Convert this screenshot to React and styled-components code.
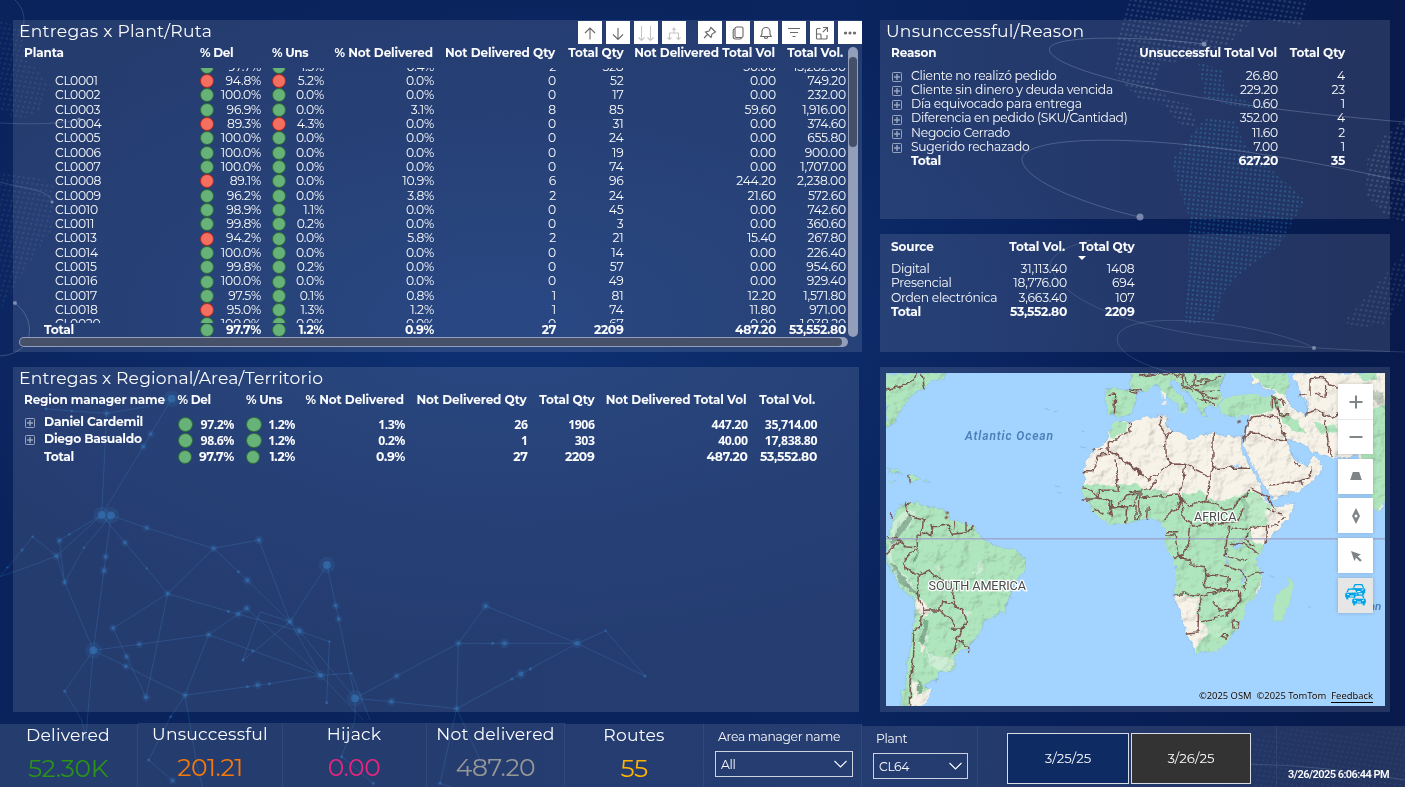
import React from "react";
import styled, { createGlobalStyle } from "styled-components";

const Global = createGlobalStyle`
  html, body { margin: 0; padding: 0; background: #0a2156; }
  *, *::before, *::after { box-sizing: border-box; }
  body { overflow: hidden; font-family: Montserrat, Inter, sans-serif; color: #fafbfd; }
`;

const Page = styled.main`
  position: relative;
  width: 1405px;
  height: 787px;
  overflow: hidden;
  display: flex;
  flex-direction: column;
  background:
    radial-gradient(ellipse 640px 330px at 500px 320px, #0e3174 0%, rgba(13, 45, 108, 0.75) 45%, rgba(10, 34, 92, 0) 100%),
    linear-gradient(90deg, #0a235c 0%, #0a255f 60%, #08205a 75%, #071a4b 100%);
`;
const Backdrop = styled.svg`
  position: absolute;
  inset: 0;
`;
const Board = styled.div`
  position: relative;
  display: flex;
  height: 712px;
  padding: 20px 15px 0 13px;
`;
const LeftCol = styled.div`
  display: flex;
  flex-direction: column;
  gap: 15px;
  width: 867px;
`;
const RightCol = styled(LeftCol)`
  width: 510px;
`;
const Panel = styled.section`
  position: relative;
  flex: none;
  width: ${(p) => p.$w}px;
  height: ${(p) => p.$h}px;
  background: rgba(255, 255, 255, 0.115);
`;
const Title = styled.h2`
  margin: 0;
  padding-left: 6px;
  height: 23px;
  line-height: 22px;
  font-weight: 400;
  font-size: 17.200px;
  letter-spacing: ${(p) => p.$ls ?? 0.2}px;
  white-space: nowrap;
`;

/* ---- tables ---- */
const HeadRow = styled.div`
  display: grid;
  grid-template-columns: ${(p) => p.$cols};
  height: 20px;
  line-height: 20px;
  font-weight: 700;
  font-size: 12px;
`;
const HeadCell = styled.div`
  text-align: ${(p) => (p.$left ? "left" : "right")};
  padding-left: ${(p) => p.$pl || 0}px;
  padding-right: ${(p) => p.$pr || 0}px;
  letter-spacing: ${(p) => p.$ls ?? -0.12}px;
  white-space: nowrap;
`;
const Row = styled.div`
  display: grid;
  grid-template-columns: ${(p) => p.$cols};
  height: ${(p) => p.$h || 14.32}px;
  line-height: ${(p) => p.$h || 14.32}px;
  font-size: 12.3px;
  font-weight: ${(p) => (p.$bold ? 700 : 400)};
  letter-spacing: ${(p) => p.$ls ?? (p.$bold ? -0.28 : -0.2)}px;
  white-space: nowrap;
`;
const Cell = styled.div`
  display: flex;
  align-items: center;
  justify-content: ${(p) => (p.$status ? "space-between" : "flex-end")};
  padding-left: ${(p) => p.$pl || 0}px;
`;
const NameCell = styled.div`
  display: flex;
  align-items: center;
  padding-left: ${(p) => p.$pl}px;
  letter-spacing: ${(p) => p.$ls ?? -0.27}px;
`;
const Dot = styled.i`
  flex: none;
  width: ${(p) => p.$s || 14}px;
  height: ${(p) => p.$s || 14}px;
  border-radius: 50%;
  background: ${(p) => (p.$bad ? "#f46f60" : "#67b279")};
  border: 1px solid ${(p) => (p.$bad ? "#b5251d" : "#2c6a35")};
`;
const Clip = styled.div`
  height: 255px;
  margin-top: 5px;
  overflow: hidden;
`;
const Shift = styled.div`
  margin-top: -8.3px;
`;

/* ---- scrollbars ---- */
const Body = styled.div`
  display: flex;
  height: 294px;
`;
const TableArea = styled.div`
  width: 835px;
`;
const VTrack = styled.div`
  width: 10px;
  height: 290px;
  margin-top: 4px;
  padding: 10px 1px 0;
  border-radius: 5px;
  background: #939eba;
`;
const VThumb = styled.div`
  height: 90px;
  border-radius: 4px;
  background: #454f68;
`;
const HTrack = styled.div`
  width: 829px;
  height: 10px;
  margin-left: 6px;
  padding: 1px 6px 1px 1px;
  border-radius: 5px;
  background: #939eba;
`;
const HThumb = styled.div`
  height: 8px;
  border-radius: 4px;
  background: #465068;
`;

/* ---- visual header toolbar ---- */
const Toolbar = styled.div`
  position: absolute;
  top: 1px;
  right: 0;
  display: flex;
  gap: 4px;
`;
const Tool = styled.button`
  width: 24px;
  height: 23px;
  padding: 0;
  border: 0;
  background: #fff;
  color: ${(p) => (p.$dim ? "#c8c6c4" : "#6b6967")};
  margin-left: ${(p) => (p.$gap ? 8 : 0)}px;
  svg { display: block; }
`;

const TOOLS = [
  { d: "M12 18.500V7M7 12l5-5 5 5" },
  { d: "M12 7v11.500M7 13.500l5 5 5-5" },
  { d: "M7.500 5v14.500M4.500 16.500l3 3 3-3M16.500 5v14.500M13.500 16.500l3 3 3-3", dim: true },
  { d: "M12 7v5M7.500 18.500v-6.500h9v6.500M5.500 16.500l2 2 2-2M14.500 16.500l2 2 2-2M10.500 9l1.500-2 1.500 2", dim: true },
  { d: "M13 6.500l4.500 4.500-3.500 2-1 3.500-5.500-5.500 3.500-1zM9.500 13.500L6 17", gap: true },
  { d: "M10 6h5.500a1.500 1.500 0 0 1 1.500 1.500v7.500a1.500 1.500 0 0 1-1.500 1.500h-5a1.500 1.500 0 0 1-1.500-1.500v-7.500a1.500 1.500 0 0 1 1.500-1.500zM9 7.800Q7.200 8 7.200 9.500v6q0 2.500 2.500 2.500h4Q15 18 15.500 17" },
  { d: "M6.800 15.500l1.200-2.500v-2.500a4 4 0 0 1 8 0v2.500l1.200 2.500zM10.300 15.800a1.700 1.700 0 0 0 3.400 0" },
  { d: "M6 7.500h12M8 11.500h8M10.500 15.500h3" },
  { d: "M10.500 7.500h-3a1 1 0 0 0-1 1v8.500a1 1 0 0 0 1 1h8.500a1 1 0 0 0 1-1v-3M13 6.500h4.500v4.500M17.300 6.700l-4.500 4.500M6.500 13h3.500a1 1 0 0 1 1 1v4" },
  { dots: true },
];

/* ---- expand toggle and sort marker ---- */
const ToggleBox = styled.span`
  width: ${(p) => p.$w}px;
  flex: none;
  display: flex;
  position: relative;
  top: 1px;
  opacity: 0.62;
`;
const Toggle = ({ w = 20 }) => (
  <ToggleBox $w={w}>
    <svg width="10" height="10" viewBox="0 0 10 10" fill="none" stroke="#dfe4ee">
      <rect x="0.500" y="0.500" width="9" height="9" rx="0.800" />
      <path d="M2 5h6M5 2v6" strokeWidth="1.400" />
    </svg>
  </ToggleBox>
);
const SortMark = styled.span`
  position: absolute;
  top: 22px;
  left: 198px;
  border: 4px solid transparent;
  border-top-color: #fff;
  border-bottom: 0;
`;

/* ---- data ---- */
const PLANTS = [
  ["", 97.7, "1.5%", "0.4%", "2", "328", "50.00", "13,282.00"],
  ["CL0001", 94.8, "5.2%", "0.0%", "0", "52", "0.00", "749.20"],
  ["CL0002", 100, "0.0%", "0.0%", "0", "17", "0.00", "232.00"],
  ["CL0003", 96.9, "0.0%", "3.1%", "8", "85", "59.60", "1,916.00"],
  ["CL0004", 89.3, "4.3%", "0.0%", "0", "31", "0.00", "374.60"],
  ["CL0005", 100, "0.0%", "0.0%", "0", "24", "0.00", "655.80"],
  ["CL0006", 100, "0.0%", "0.0%", "0", "19", "0.00", "900.00"],
  ["CL0007", 100, "0.0%", "0.0%", "0", "74", "0.00", "1,707.00"],
  ["CL0008", 89.1, "0.0%", "10.9%", "6", "96", "244.20", "2,238.00"],
  ["CL0009", 96.2, "0.0%", "3.8%", "2", "24", "21.60", "572.60"],
  ["CL0010", 98.9, "1.1%", "0.0%", "0", "45", "0.00", "742.60"],
  ["CL0011", 99.8, "0.2%", "0.0%", "0", "3", "0.00", "360.60"],
  ["CL0013", 94.2, "0.0%", "5.8%", "2", "21", "15.40", "267.80"],
  ["CL0014", 100, "0.0%", "0.0%", "0", "14", "0.00", "226.40"],
  ["CL0015", 99.8, "0.2%", "0.0%", "0", "57", "0.00", "954.60"],
  ["CL0016", 100, "0.0%", "0.0%", "0", "49", "0.00", "929.40"],
  ["CL0017", 97.5, "0.1%", "0.8%", "1", "81", "12.20", "1,571.80"],
  ["CL0018", 95.0, "1.3%", "1.2%", "1", "74", "11.80", "971.00"],
  ["CL0020", 100, "0.0%", "0.0%", "0", "67", "0.00", "1,038.20"],
];
const TOTALS = ["27", "2209", "487.20", "53,552.80"];
const REASONS = [
  ["Cliente no realizó pedido", "26.80", "4"],
  ["Cliente sin dinero y deuda vencida", "229.20", "23"],
  ["Día equivocado para entrega", "0.60", "1"],
  ["Diferencia en pedido (SKU/Cantidad)", "352.00", "4"],
  ["Negocio Cerrado", "11.60", "2"],
  ["Sugerido rechazado", "7.00", "1"],
];
const SOURCES = [
  ["Digital", "31,113.40", "1408"],
  ["Presencial", "18,776.00", "694"],
  ["Orden electrónica", "3,663.40", "107"],
];

const C1 = "187px 61px 63px 110px 122px 67.5px 152.5px 70px";
const C2 = "164.5px 56.5px 61px 110px 122.5px 67px 153px 69.500px";
const C3 = "200px 198px 67px";
const C4 = "100px 87px 67.500px";

const PlantTable = () => (
  <Panel $w={849} $h={332}>
    <Title $ls={0.25}>Entregas x Plant/Ruta</Title>
    <Body>
      <TableArea>
        <HeadRow $cols={C1}>
          <HeadCell $left $pl={11} $ls={-0.1}>Planta</HeadCell>
          <HeadCell $left $ls={-0.35}>% Del</HeadCell>
          <HeadCell $left $pl={11} $ls={-0.35}>% Uns</HeadCell>
          <HeadCell $pr={1}>% Not Delivered</HeadCell>
          <HeadCell $pr={1}>Not Delivered Qty</HeadCell>
          <HeadCell>Total Qty</HeadCell>
          <HeadCell $pr={1}>Not Delivered Total Vol</HeadCell>
          <HeadCell $pr={3}>Total Vol.</HeadCell>
        </HeadRow>
        <Clip>
          <Shift>
            {PLANTS.map((r, i) => (
              <Row key={i} $cols={C1}>
                <NameCell $pl={42} $ls={-0.3}>{r[0]}</NameCell>
                <Cell $status><Dot $bad={r[1] <= 95} />{r[1].toFixed(1)}%</Cell>
                <Cell $status $pl={11}><Dot $bad={parseFloat(r[2]) > 4} />{r[2]}</Cell>
                {r.slice(3).map((v, k) => <Cell key={k}>{v}</Cell>)}
              </Row>
            ))}
          </Shift>
        </Clip>
        <Row $cols={C1} $h={14} $bold>
          <NameCell $pl={31}>Total</NameCell>
          <Cell $status><Dot />97.7%</Cell>
          <Cell $status $pl={11}><Dot />1.2%</Cell>
          <Cell>0.9%</Cell>
          {TOTALS.map((v) => <Cell key={v}>{v}</Cell>)}
        </Row>
      </TableArea>
      <VTrack><VThumb /></VTrack>
    </Body>
    <HTrack><HThumb /></HTrack>
    <Toolbar>
      {TOOLS.map((t, i) => (
        <Tool key={i} $dim={t.dim} $gap={t.gap}>
          <svg width="24" height="24" viewBox="0 0 24 24" fill="none" stroke="currentColor" strokeWidth="1.100">
            {t.dots
              ? [7.5, 12, 16.5].map((x) => <circle key={x} cx={x} cy="12" r="1" fill="currentColor" />)
              : <path d={t.d} />}
          </svg>
        </Tool>
      ))}
    </Toolbar>
  </Panel>
);

const RegionRow = styled(Row)`
  height: ${(p) => p.$rh}px;
  line-height: 17px;
  font-family: ${(p) => (p.$alt ? '"Noto Sans", sans-serif' : "inherit")};
`;
const ManagerName = styled(NameCell)`
  font-family: Montserrat, Inter, sans-serif;
  font-size: 12.3px;
  position: relative;
  top: ${(p) => p.$dy || 0}px;
`;
const RegionBody = styled.div`
  padding-top: 6px;
`;
const RegionTable = () => (
  <Panel $w={846} $h={345}>
    <Title $ls={0.13}>Entregas x Regional/Area/Territorio</Title>
    <HeadRow $cols={C2}>
      <HeadCell $left $pl={11} $ls={-0.17}>Region manager name</HeadCell>
      <HeadCell $left $ls={-0.35}>% Del</HeadCell>
      <HeadCell $left $pl={12} $ls={-0.35}>% Uns</HeadCell>
      <HeadCell $pr={1}>% Not Delivered</HeadCell>
      <HeadCell $pr={1}>Not Delivered Qty</HeadCell>
      <HeadCell>Total Qty</HeadCell>
      <HeadCell $pr={1}>Not Delivered Total Vol</HeadCell>
      <HeadCell $pr={2}>Total Vol.</HeadCell>
    </HeadRow>
    <RegionBody>
      {[
        ["Daniel Cardemil", "97.2%", "1.2%", "1.3%", "26", "1906", "447.20", "35,714.00"],
        ["Diego Basualdo", "98.6%", "1.2%", "0.2%", "1", "303", "40.00", "17,838.80"],
      ].map((r, i) => (
        <RegionRow key={r[0]} $cols={C2} $bold $alt $rh={16} $ls={-0.45}>
          <ManagerName $pl={12} $dy={i ? -2 : -3}><Toggle w={19} />{r[0]}</ManagerName>
          <Cell $status><Dot $s={15.5} />{r[1]}</Cell>
          <Cell $status $pl={12}><Dot $s={15.5} />{r[2]}</Cell>
          {r.slice(3).map((v, k) => <Cell key={k}>{v}</Cell>)}
        </RegionRow>
      ))}
      <RegionRow $cols={C2} $bold $rh={14}>
        <NameCell $pl={31}>Total</NameCell>
        <Cell $status><Dot />97.7%</Cell>
        <Cell $status $pl={12}><Dot />1.2%</Cell>
        <Cell>0.9%</Cell>
        {TOTALS.map((v) => <Cell key={v}>{v}</Cell>)}
      </RegionRow>
    </RegionBody>
  </Panel>
);

const ReasonBody = styled.div`
  padding-top: 5.5px;
`;
const ReasonTable = () => (
  <Panel $w={510} $h={199}>
    <Title>Unsunccessful/Reason</Title>
    <HeadRow $cols={C3}>
      <HeadCell $left $pl={11}>Reason</HeadCell>
      <HeadCell $pr={1}>Unsuccessful Total Vol</HeadCell>
      <HeadCell>Total Qty</HeadCell>
    </HeadRow>
    <ReasonBody>
      {REASONS.map((r) => (
        <Row key={r[0]} $cols={C3}>
          <NameCell $pl={12}><Toggle w={19} />{r[0]}</NameCell>
          <Cell>{r[1]}</Cell>
          <Cell>{r[2]}</Cell>
        </Row>
      ))}
      <Row $cols={C3} $bold>
        <NameCell $pl={31}>Total</NameCell>
        <Cell>627.20</Cell>
        <Cell>35</Cell>
      </Row>
    </ReasonBody>
  </Panel>
);

const SourceBody = styled.div`
  padding-top: 5px;
`;
const SourcePanel = styled(Panel)`
  padding-top: 3px;
`;
const SourceTable = () => (
  <SourcePanel $w={510} $h={118}>
    <HeadRow $cols={C4}>
      <HeadCell $left $pl={11}>Source</HeadCell>
      <HeadCell $pr={2}>Total Vol.</HeadCell>
      <HeadCell>Total Qty</HeadCell>
    </HeadRow>
    <SortMark />
    <SourceBody>
      {SOURCES.map((r) => (
        <Row key={r[0]} $cols={C4}>
          <NameCell $pl={11}>{r[0]}</NameCell>
          <Cell>{r[1]}</Cell>
          <Cell>{r[2]}</Cell>
        </Row>
      ))}
      <Row $cols={C4} $bold>
        <NameCell $pl={11}>Total</NameCell>
        <Cell>53,552.80</Cell>
        <Cell>2209</Cell>
      </Row>
    </SourceBody>
  </SourcePanel>
);

/* ---- map ---- */
const MapPanel = styled(Panel)`
  padding: 6px 5px 6px 6px;
`;
const MapFrame = styled.div`
  position: relative;
  width: 499px;
  height: 333px;
  overflow: hidden;
  background: #a3d3ff;
`;
const Relief = styled.g`
  mix-blend-mode: multiply;
`;
const Controls = styled.div`
  position: absolute;
  top: 11px;
  left: 452px;
  display: flex;
  flex-direction: column;
  gap: 4.700px;
`;
const ControlGroup = styled.div`
  display: flex;
  flex-direction: column;
  box-shadow: 0 0 4px rgba(0, 0, 0, 0.2);
`;
const Control = styled.button`
  width: 35px;
  height: 35px;
  padding: 0;
  border: 0;
  background: ${(p) => (p.$on ? "#e6e6e6" : "#fff")};
  display: grid;
  place-items: center;
  & + & { border-top: 1px solid #e8e8e8; }
`;
const Credits = styled.div`
  position: absolute;
  right: 12px;
  bottom: 3px;
  display: flex;
  gap: 5px;
  color: #000;
  font: 9.4px/12px "Noto Sans", sans-serif;
  text-shadow: 0 0 1px #fff;
  span { border-bottom: 1px solid transparent; }
  span:last-child { border-color: #000; }
`;
const MapText = styled.text`
  font-family: Roboto, sans-serif;
  paint-order: stroke;
`;

const AFRICA =
  "M712 168L730 165 745 172 780 160 845 148 868 160 858 175 875 195 915 205 930 220 945 222 965 210 985 200 1040 215 1085 212 1092 238 1080 250 1115 310 1125 335 1140 360 1150 390 1172 422 1190 425 1245 412 1230 450 1190 500 1160 530 1140 565 1132 590 1140 605 1146 640 1140 680 1120 700 1095 715 1097 750 1075 768 1072 790 1045 830 1020 852 990 860 945 868 937 840 915 800 900 740 878 690 890 650 885 600 875 570 855 530 855 500 845 475 815 460 780 468 740 475 695 480 650 450 615 400 605 370 615 345 605 320 625 280 650 250 680 225 690 190Z";
const SOUTH_AMERICA =
  "M18 512L35 490 45 450 60 425 95 410 130 422 190 430 215 460 255 475 280 485 305 525 345 540 370 552 400 555 435 575 437 605 400 655 390 700 375 740 340 752 310 770 305 800 265 850 225 870 230 900 215 915 180 920 175 945 130 958 155 975 140 1000 120 1025 60 1025 75 950 85 880 100 800 105 700 70 680 40 620 18 590Z";
const NORTH =
  "M18 24H200L190 40 150 48 130 70 95 90 70 130 50 150 45 175 18 190ZM18 308L50 318 70 328 40 326ZM82 338L100 332 120 342 95 350ZM132 348h14v5h-14zM30 346l18 3-10 6z";
const EUROPE =
  "M752 24H1040L1030 45 1015 80 1025 98 1010 125 990 120 975 135 980 152 965 150 950 120 940 100 905 70 880 45 868 55 890 85 925 115 920 130 905 140 895 120 860 95 830 60 810 65 795 80 770 82 765 120 750 150 710 155 680 145 678 70 755 75Z";
const ASIA =
  "M1110 24H1220L1230 60 1215 85 1245 140 1280 145 1278 115 1262 90 1240 40 1250 24H1520V390L1510 430 1495 440 1480 420 1470 370 1455 300 1430 270 1400 278 1350 275 1300 262 1270 235 1222 225 1245 285 1280 302 1300 275 1325 300 1320 330 1280 365 1180 405 1150 360 1110 290 1090 240 1100 180 1105 150 1060 158 1020 145 1018 110 1060 92 1120 90 1170 100 1190 85 1140 60 1120 55Z";
const GREEN_ASIA =
  "M1018 110L1060 92 1120 90 1190 95 1200 120 1175 145 1100 150 1060 158 1020 145ZM1110 24H1220L1230 60 1210 90 1140 55ZM1195 140L1230 150 1260 180 1280 200 1250 205 1215 180ZM1455 300L1425 230 1450 160 1480 130 1520 120V400L1495 440 1480 420ZM1430 24h60v20l-40 5zM1300 170l60 10 15 20-50 10z";
const GREEN_AFRICA =
  "M600 360L765 357 790 370 850 380 900 395 960 372 985 400 1030 412 1090 385 1130 380 1180 432 1150 440 1160 485 1110 480 1110 520 1160 545 1140 660 1090 780 1030 870 930 880 960 830 990 800 955 760 955 700 870 685 840 490 600 500ZM712 168L745 172 735 205 690 220 690 190Z";
const BORDERS = [
  "M605 320H640L655 270 685 268V235L720 215 750 200 748 170M685 250L780 320 805 345 875 297 915 298 990 335 985 375 978 405M685 250L780 325M705 280L715 375 655 376 655 400M605 368l30 5 20 28 40 10-5 40M605 402h50l30 5 10 48M720 425l20 5-3 45M715 420l25-30 40-10M780 385l-4 80M768 420v45M750 380l60-10 20-25M690 425h70l15-40M640 435l15-5 15 20",
  "M845 150L840 180 855 200 860 290 875 297M875 195l-15 25M1000 205L998 310 990 335M998 310H1113M915 298L900 395 930 420 985 410 1020 425 1040 435 1060 430 1080 405 1110 380",
  "M782 400l20-5 90-5 15 15-20 30-20 10-15 20M905 400l5 60 30 20 70-5 60-5 20-40M935 485l-5 40-20 45-15 5-10-65h-30M880 575l45 5 10 20 40 5 5 50M878 687l35 0 50 5 45-10M960 695l-3 105M957 800l-40 5M963 770l60-15 40-15 20-60M970 655l40 20 30-5 5-35-55-8-15 2M1050 485l-10 40-5 50 45 15 20-10M1050 535l50 5 35 30M1055 490h45l15-10M1035 600l45 15 20 30-5 30M1100 632l48-10M1000 690l25-15 50 5 2 30-20 30-40-5-15-25M1058 775l5-10 10 5-2 18-12 0zM1020 815l12-12 12 8-10 14zM1110 490l-15 35 30 15M1110 480l50 10-5 50M1115 370l50 25 20 40M855 500h40M805 430l-3 35",
  "M1160 430l50 20-20 30-40 10M640 252h50",
  "M1090 230l10-60 25-15 60-5 15 25 20 55-50-10-50-20-30 15M1170 360l60-5 60-20 5-30M1260 340l8 25M1240 290l25 15M1185 100l10 45 30 5M1340 60l-2 35-30-10M1275 145l40-10 40 25 20-10M1335 165l10 70 15 35M1255 85l20 5M1290 90V45l30-5 50 25M1370 65l60 5M1350 230l-5 35",
  "M685 88h20l-5 60M750 70l35 10M780 30l50-5M750 78l25 5M835 28l40-3 40 15 10 25 30 10 30 25 30-5M910 25l-5 35 30 20M945 28l-5 40 30 20M960 80l60-2M930 60l60-10M955 100l50 15M1175 95l45 20M950 45h50l20-15M970 90l5 25M1180 100v35M1200 100l10 25",
  "M80 412L75 425 90 455 130 465 125 510 108 515 110 560 85 568 70 590 80 615 115 628 150 615 160 635 200 650 222 680 220 710 185 710 178 738 140 738 130 740 112 690 115 628M95 410l-15 15M130 505l25 10 5-30 40-5 15 28 45-5 20-20M228 465l-5 35M258 470v30M160 490l-5-10M18 510l40 15 15 20 35 3M58 525l-20 25-20 20",
  "M130 740L122 780 105 800 100 880 90 950 92 1022M178 738l45 35-8 20 30-2 15-20-10-30-30-25V710M258 775l-30 45-10 45M228 820l38 25v20",
  "M18 75l50-12 35-15 5-24M125 24l10 45M90 332v20M30 445l8 10",
];
const DARK_RELIEF =
  "M90 445L55 490 30 530 35 545 65 505 95 465ZM28 590L60 650 105 688 112 684 75 648 45 600ZM132 760l14 4-4 30-20 50-8-10 12-40ZM112 940l8 4 4 40-10 4zM110 560l4 20-10 20z";

const LabelSets = () => (
  <>
    <MapText x="79" y="67" fontSize="12" fontStyle="italic" fontWeight="600" fill="#4d7fb8" textLength="88">Atlantic Ocean</MapText>
    <MapText x="42.500" y="217" fontSize="12.700" fill="#4b4b4b" stroke="#fff" strokeWidth="2.500" textLength="97.500">SOUTH AMERICA</MapText>
    <MapText x="308" y="148" fontSize="12.700" fill="#4b4b4b" stroke="#fff" strokeWidth="2.500" textLength="42.500">AFRICA</MapText>
    <MapText x="483" y="237" fontSize="11.500" fontStyle="italic" fontWeight="600" fill="#4d7fb8">an</MapText>
  </>
);

const Car = ({ x, y }) => (
  <g transform={`translate(${x} ${y})`}>
    <path d="M2.500 4L4 .7h7L12.500 4" fill="#e6e6e6" stroke="#00a2e8" strokeWidth="1.300" />
    <path d="M.5 5.500Q.5 4 2 4h11q1.500 0 1.500 1.500V9H13.500v2h-2.500V9.200H4V11H1.500V9H.5z" fill="#00a2e8" stroke="#e6e6e6" strokeWidth=".4" />
    <path d="M2.500 5.500l2 .8M12.500 5.500l-2 .8M5.500 7.500h4" stroke="#fff" strokeWidth=".9" />
  </g>
);

const WorldMap = () => (
  <MapPanel $w={510} $h={345}>
    <MapFrame>
      <svg width="499" height="333" viewBox="0 0 499 333">
        <defs>
          <filter id="relief" x="0" y="0" width="100%" height="100%">
            <feTurbulence type="fractalNoise" baseFrequency="0.075" numOctaves="5" seed="8" result="n" />
            <feDiffuseLighting in="n" surfaceScale="3" lightingColor="#fff" diffuseConstant="1.180">
              <feDistantLight azimuth="225" elevation="58" />
            </feDiffuseLighting>
          </filter>
          <filter id="rough" x="-5%" y="-5%" width="110%" height="110%">
            <feTurbulence type="fractalNoise" baseFrequency="0.120" numOctaves="3" seed="3" result="w" />
            <feDisplacementMap in="SourceGraphic" in2="w" scale="7" xChannelSelector="R" yChannelSelector="G" />
          </filter>
          <clipPath id="africa"><path d={AFRICA} /></clipPath>
          <clipPath id="land">
            <path transform="translate(-6 -8) scale(.33333)" d={AFRICA + SOUTH_AMERICA + NORTH + EUROPE + ASIA} />
          </clipPath>
        </defs>
        <g filter="url(#rough)">
          <rect x="-10" y="-10" width="520" height="355" fill="#a3d3ff" />
          <g transform="translate(-6 -8) scale(.33333)">
            <g stroke="#8ebde9" strokeWidth="2">
              <path d={SOUTH_AMERICA + NORTH} fill="#b0e6bd" />
              <path d={EUROPE} fill="#b0e6bd" />
              <path d={AFRICA + ASIA} fill="#f7f3e9" />
            </g>
            <path d={GREEN_ASIA} fill="#b0e6bd" />
            <path d={GREEN_AFRICA} fill="#b0e6bd" clipPath="url(#africa)" />
            <path d="M1230 640l8 25-12 50-18 52-25 0-5-35 10-45 25-15z" fill="#b0e6bd" stroke="#9bcbd0" />
            <path d="M40 470L80 430 110 440 90 480 50 520 35 580 60 620 100 660 100 690 50 640 22 570ZM115 790L140 840 150 870 200 880 230 890 200 915 150 900 140 850 150 820ZM290 600l20-10 0 30-20 15zM165 600l12 0 5 30zM240 740l40-5-20 25z" fill="#cdeed5" />
            <path d="M108 700l20 0 25 45-25 10-18-20zM112 830l22 15-10 15zM100 940l15 20-5 30 45-20-10 30-25 25H92zM272 622l12-2-2 8z" fill="#f5f1e6" />
            <path d="M1100 395l40-5 25 30-10 50-50 10-15-40zM1000 700l60-15 10 25-25 25-40-10zM960 800l40-20 50 10-20 30z" fill="#c9eed2" opacity=".5" />
            <path d="M845 80h10v18h-10zM848 105h8v14h-8z" fill="#f5f1e6" />
            <path d="M885 135l35-2-5 14zM975 160l22 2-5 4zM1073 165l15-3-8 10z" fill="#b0e6bd" />
            <path d="M1050 535l30-5 5 15-20 10zM1065 300l15-2-12 12zM1170 178l8 2 0 8zM1035 560l5 0 5 35-4 2zM1085 615l6 2 2 45-5-2z" fill="#a3d3ff" />
            <path d={DARK_RELIEF} fill="#4d7a60" opacity=".5" />
            <path d="M1470 70l40 10 10 60-30-20zM1090 400l20 20-15 40-5-20zM1020 50l-40-10-20 20 20 10z" fill="#5d8a70" opacity=".3" />
          </g>
          <g transform="translate(-6 -8) scale(.33333)" fill="none" stroke="#7b5550" strokeWidth="4.300" strokeLinejoin="round">
            {BORDERS.map((d, i) => (
              <path key={i} d={d} strokeDasharray={i === 3 ? "10 8" : undefined} />
            ))}
          </g>
        </g>
        <Relief clipPath="url(#land)" opacity=".6">
          <rect width="499" height="333" filter="url(#relief)" />
        </Relief>
        <g transform="translate(-6 -8) scale(.33333)">
          <path d="M195 460l8-5M198 445l8-3M1072 172l10-4" stroke="#7b5550" strokeWidth="7" />
          <path d="M18 522H1520" stroke="#9d9fc6" strokeWidth="4" opacity=".8" />
          <path d="M494 130l15 5M520 142l12-4M600 245l20 4M605 198l8 2M525 362l14 4M532 382l12 2M1285 728l8-3M1170 632l14 6" stroke="#8bbde8" strokeWidth="3" />
        </g>
        <LabelSets />
      </svg>
      <Controls>
        <ControlGroup>
          <Control><svg width="16" height="16" viewBox="0 0 16 16"><path d="M8 1.500v13M1.500 8h13" stroke="#7f8487" strokeWidth="2" /></svg></Control>
          <Control><svg width="16" height="16" viewBox="0 0 16 16"><path d="M1.500 8h13" stroke="#7f8487" strokeWidth="2" /></svg></Control>
        </ControlGroup>
        <ControlGroup>
          <Control><svg width="16" height="16" viewBox="0 0 16 16"><path d="M4.800 4h6.400l2.600 8H2.200z" fill="#7f8487" /></svg></Control>
        </ControlGroup>
        <ControlGroup>
          <Control><svg width="16" height="18" viewBox="0 0 16 18"><path d="M8 1l4 8-4 8-4-8z" fill="#7f8487" /><circle cx="8" cy="9" r="1.500" fill="#fff" /></svg></Control>
        </ControlGroup>
        <ControlGroup>
          <Control><svg width="16" height="16" viewBox="0 0 16 16"><path d="M3 3l10 3.500-3.300 1.700 4 4-1.600 1.600-4-4L6.400 13z" fill="#7f8487" /></svg></Control>
        </ControlGroup>
        <ControlGroup>
          <Control $on>
            <svg width="24" height="26" viewBox="0 0 24 26">
              <Car x={7} y={2} /><Car x={.5} y={6.500} /><Car x={7.500} y={12.500} />
            </svg>
          </Control>
        </ControlGroup>
      </Controls>
      <Credits><span>©2025 OSM</span><span>©2025 TomTom</span><span>Feedback</span></Credits>
    </MapFrame>
  </MapPanel>
);

/* ---- footer ---- */
const Footer = styled.footer`
  position: relative;
  display: flex;
  align-items: flex-end;
  height: 75px;
`;
const Card = styled.div`
  flex: none;
  width: ${(p) => p.$w}px;
  height: ${(p) => p.$h}px;
  padding-right: ${(p) => p.$pr || 0}px;
  background: rgba(255, 255, 255, 0.115);
  border-right: 1px solid rgba(255, 255, 255, 0.06);
  display: flex;
  flex-direction: column;
  align-items: center;
`;
const KpiName = styled.div`
  height: 22px;
  line-height: 22px;
  font-size: 17.200px;
  letter-spacing: ${(p) => p.$ls ?? 0.2}px;
  white-space: nowrap;
`;
const KpiValue = styled.div`
  margin-top: 9px;
  line-height: 26px;
  font-size: 25px;
  font-weight: 400;
  color: ${(p) => p.$color};
  letter-spacing: ${(p) => p.$ls ?? -0.5}px;
`;
const FilterCard = styled(Card)`
  align-items: flex-start;
  padding: ${(p) => p.$pad};
`;
const FilterLabel = styled.label`
  padding-left: 3px;
  font-size: 12.3px;
  line-height: 16px;
  letter-spacing: ${(p) => p.$ls ?? -0.3}px;
`;
const Select = styled.div`
  display: flex;
  align-items: center;
  justify-content: space-between;
  width: ${(p) => p.$w}px;
  height: 26px;
  margin-top: 6px;
  padding: 0 4px 0 5px;
  border: 1.500px solid #ccd2df;
  font-size: 12.3px;
  letter-spacing: -0.3px;
`;
const DateCard = styled(Card)`
  flex-direction: row;
  align-items: flex-start;
  padding: 7px 0 0 29px;
  gap: 2px;
`;
const DateTile = styled.button`
  width: ${(p) => p.$w}px;
  height: 51px;
  padding: 0 0 2px;
  border: 1px solid #d9dde6;
  background: ${(p) => p.$bg};
  color: #fafbfd;
  font: 400 13.3px Montserrat, Inter, sans-serif;
`;
const Stamp = styled(Card)`
  border: 0;
  padding: 41px 16px 0 0;
  align-items: flex-end;
  font: 600 11px/16px Roboto, sans-serif;
  letter-spacing: -0.55px;
  white-space: nowrap;
`;
const Chevron = () => (
  <svg width="15" height="10" viewBox="0 0 15 10" fill="none" stroke="#fff" strokeWidth="1.100"><path d="M1.500 2l6 6 6-6" /></svg>
);

/* ---- backdrop art ---- */
const NET =
  "M138 146L215 153 320 160 440 140 515 116M515 116L452 222 430 260 305 465M320 160L305 465M305 465L208 523 178 542 194 667 280 871M305 465L170 588 72 625 0 650M0 650L66 570 98 530 170 588 195 667M333 466L252 563 194 667M333 466L317 590 312 632 280 871M305 465L375 548 440 625 503 701M333 466L440 504 503 523 641 565 777 540 870 785M641 565L503 701 402 765 339 804 380 890 438 1012M641 565L715 635 742 661 898 813M503 701L685 754 898 813 988 845 980 1028M503 701L467 875 438 1012M280 871L418 853 626 824 740 745 962 946M626 824L758 872 962 946M626 824L555 1006M280 871L378 919 465 963 555 1006 742 980 808 971 962 946 1054 940M280 871L194 994 245 1080M280 871L262 1080M729 900L780 755 870 785 788 853 729 900M981 615L870 785M981 615L1016 777 1065 1015M898 813L1065 1015M870 785L962 946 1090 1080M1065 1015L1190 948 1375 850 1457 738 1732 850 1817 812 1935 948 1732 850H1375L1370 1046 1732 850M1065 1015L1174 1025 1370 1046M1065 1015L1065 1080M1054 940L1110 1080M555 1006L512 1070 446 1200 518 1262M555 1006L590 1210 612 1300M245 1080L258 1134M262 1080L258 1134M1065 1080L1025 1190 1120 1270M1370 1046L1320 1270 1410 1300M1370 1046L1450 1220";
const NODES = [
  [305, 465, 13], [333, 466, 13], [280, 871, 13], [1065, 1015, 13], [981, 615, 13], [515, 116, 13], [1732, 850, 8], [170, 588, 7], [503, 701, 6], [641, 565, 6], [777, 540, 7], [740, 745, 7], [898, 813, 8], [870, 785, 7], [962, 946, 8], [555, 1006, 6], [626, 824, 6], [729, 900, 5], [438, 1012, 7], [1457, 738, 7], [1375, 850, 6], [1370, 1046, 6],
  [1935, 948, 5], [1817, 812, 4], [320, 160, 6], [452, 222, 6], [430, 260, 6], [215, 153, 4], [138, 146, 5], [178, 542, 6], [194, 667, 6], [317, 590, 6], [312, 632, 7], [375, 548, 6], [440, 504, 6], [440, 625, 4], [339, 804, 6], [380, 890, 6], [378, 919, 6], [418, 853, 6], [685, 754, 5], [715, 762, 7], [742, 661, 7], [715, 635, 5], [758, 872, 5], [742, 980, 5], [773, 975, 7], [808, 971, 5], [980, 1028, 5], [988, 845, 4], [1054, 940, 4], [1007, 737, 6], [1016, 777, 6], [1190, 948, 6], [1174, 1025, 7], [194, 994, 5], [66, 570, 5], [22, 622, 4], [98, 530, 4], [208, 523, 4], [252, 563, 4], [1478, 850, 5], [1514, 850, 8], [1536, 957, 5], [1563, 942, 8], [1591, 927, 5], [258, 1134, 5], [446, 1200, 5], [518, 1262, 6], [512, 1070, 5], [1025, 1190, 5], [1120, 1270, 5], [1320, 1270, 5],
];
const Art = () => (
  <Backdrop width="1405" height="787" viewBox="0 0 1405 787">
    <defs>
      <pattern id="dots" width="5" height="5" patternUnits="userSpaceOnUse" patternTransform="rotate(8) skewX(-8)">
        <circle cx="2.500" cy="2.500" r="1.150" fill="#8292b6" />
      </pattern>
      <pattern id="blueDots" width="4.500" height="4.500" patternUnits="userSpaceOnUse" patternTransform="rotate(6)">
        <circle cx="2" cy="2" r="1.050" fill="#1f6fae" />
      </pattern>
    </defs>
    <g opacity=".34" fill="url(#dots)">
      <path d="M1128 0H1310L1300 28 1270 20 1255 18 1228 45 1195 58 1160 65 1155 85 1170 100 1190 105 1198 130 1180 125 1165 105 1140 100 1115 75 1118 40Z" />
      <path d="M1405 118L1385 135 1367 160 1366 195 1385 215 1405 222Z" />
      <path d="M1405 250L1385 275 1345 320 1350 328 1385 325 1405 295Z" opacity=".7" />
      <path d="M1250 740L1290 728 1340 735 1405 727V787H1255Z" opacity=".3" />
      <path d="M0 20L20 28 28 60 50 85 40 110 20 120 0 110ZM0 170L30 175 55 185 52 230 30 262 0 310Z" opacity=".5" />
    </g>
    <path d="M1198 62L1222 70 1225 90 1260 108 1240 108 1205 98ZM1205 118L1235 120 1240 135 1255 160 1270 168 1305 200 1280 245 1245 270 1225 290 1215 320 1185 325 1190 220 1178 185 1172 160Z" fill="url(#blueDots)" opacity=".5" />
    <g fill="none" stroke="#a4b2d0" strokeOpacity=".3">
      <path d="M1205 44C1140 36 1040 34 1050 52C1060 72 1190 105 1405 122" />
      <path d="M1140 217C1090 206 1020 180 1022 158C1030 132 1180 130 1405 182" />
      <path d="M1090 240C1060 248 1045 260 1052 270C1070 310 1160 345 1405 352" strokeOpacity=".2" />
      <path d="M1315 348C1260 322 1130 308 1118 335C1112 350 1140 365 1170 372" strokeOpacity=".2" />
      <path d="M15 0C26 10 26 25 20 34M0 123C40 125 70 123 78 119M0 182C30 190 50 190 52 202" strokeOpacity=".22" />
      <path d="M13 302C27 310 35 330 25 345Q16 355 0 356" />
      <path d="M1250 764Q1330 766 1405 780" strokeOpacity=".2" />
    </g>
    <g fill="#8896b8" opacity=".75">
      <circle cx="1140" cy="217" r="3.500" /><circle cx="1204" cy="44" r="2.500" /><circle cx="1314" cy="348" r="2" /><circle cx="79" cy="119" r="1.500" /><circle cx="52" cy="202" r="1.500" /><circle cx="15" cy="303" r="2" />
    </g>
    <g transform="translate(0 360) scale(.33333)">
      <path d={NET} fill="none" stroke="#1f62a8" strokeWidth="3" opacity=".38" />
      {NODES.map(([x, y, r], i) => (
        <g key={i} fill="#1c62ab">
          {r > 5 && <circle cx={x} cy={y} r={r * 1.9} opacity=".18" />}
          <circle cx={x} cy={y} r={r * 0.9} opacity=".65" />
        </g>
      ))}
    </g>
  </Backdrop>
);

export default function App() {
  return (
    <>
      <Global />
      <Page>
        <Art />
        <Board>
          <LeftCol>
            <PlantTable />
            <RegionTable />
          </LeftCol>
          <RightCol>
            <ReasonTable />
            <SourceTable />
            <WorldMap />
          </RightCol>
        </Board>
        <Footer>
          <Card $w={138} $h={63} $pr={1}>
            <KpiName>Delivered</KpiName>
            <KpiValue $color="#2a9318" $ls={-0.4}>52.30K</KpiValue>
          </Card>
          <Card $w={145} $h={64}>
            <KpiName>Unsuccessful</KpiName>
            <KpiValue $color="#f4790b">201.21</KpiValue>
          </Card>
          <Card $w={144} $h={64} $pr={1}>
            <KpiName>Hijack</KpiName>
            <KpiValue $color="#e8267f">0.00</KpiValue>
          </Card>
          <Card $w={138} $h={64}>
            <KpiName>Not delivered</KpiName>
            <KpiValue $color="#979797">487.20</KpiValue>
          </Card>
          <Card $w={139} $h={63}>
            <KpiName>Routes</KpiName>
            <KpiValue $color="#ffb400">55</KpiValue>
          </Card>
          <FilterCard $w={158} $h={63} $pad="5px 0 0 11px">
            <FilterLabel>Area manager name</FilterLabel>
            <Select $w={138}>All<Chevron /></Select>
          </FilterCard>
          <FilterCard $w={116} $h={61} $pad="5px 0 0 11px">
            <FilterLabel>Plant</FilterLabel>
            <Select $w={95}>CL64<Chevron /></Select>
          </FilterCard>
          <DateCard $w={299} $h={61}>
            <DateTile $w={122} $bg="#0f2b63">3/25/25</DateTile>
            <DateTile $w={120} $bg="#333333">3/26/25</DateTile>
          </DateCard>
          <Stamp $w={128} $h={61}>3/26/2025 6:06:44 PM</Stamp>
        </Footer>
      </Page>
    </>
  );
}
